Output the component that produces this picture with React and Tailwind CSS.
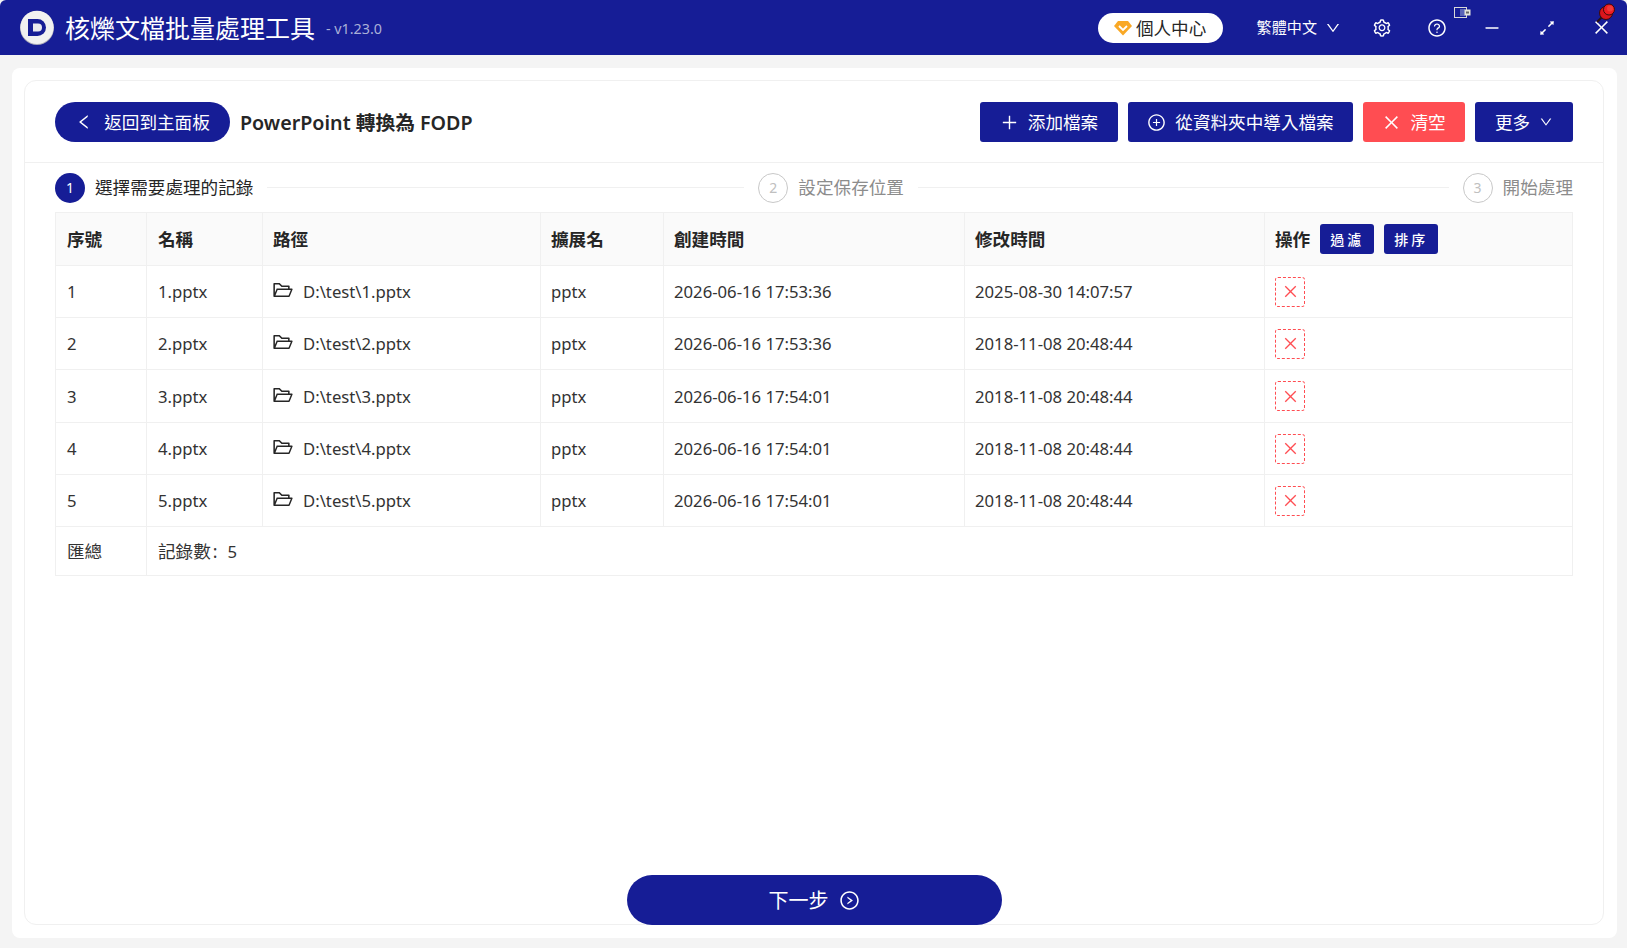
import React from "react";
import { AiOutlineLeft, AiOutlinePlus, AiOutlinePlusCircle, AiOutlineClose, AiOutlineDown, AiOutlineSetting, AiOutlineQuestionCircle, AiOutlineMinus, AiOutlineArrowsAlt, AiOutlineFolderOpen, AiOutlineRightCircle } from "react-icons/ai";

const FONT = "font-['Noto_Sans','Noto_Sans_CJK_TC',sans-serif]";

const rows = [
  ["1", "2026-06-16 17:53:36", "2025-08-30 14:07:57", "h-[52px]"],
  ["2", "2026-06-16 17:53:36", "2018-11-08 20:48:44", "h-[52px]"],
  ["3", "2026-06-16 17:54:01", "2018-11-08 20:48:44", "h-[53px]"],
  ["4", "2026-06-16 17:54:01", "2018-11-08 20:48:44", "h-[52px]"],
  ["5", "2026-06-16 17:54:01", "2018-11-08 20:48:44", "h-[52px]"],
];

function Logo() {
  return (
    <svg width="36" height="36" viewBox="0 0 36 36">
      <circle cx="18" cy="18" r="17" fill="#a9a9b8" />
      <circle cx="18" cy="17.3" r="16.6" fill="#f1f1f1" />
      <path d="M9 9h9.5a8.5 8.5 0 0 1 0 17H9z" fill="#161d96" />
      <path d="M14 13.5h5a4 4 0 0 1 0 8h-5z" fill="#e9e9ee" />
    </svg>
  );
}

function Btn({ children, className = "" }) {
  return (
    <button className={`flex h-10 items-center justify-center gap-[9px] rounded-[3px] pt-[1px] text-[17.6px] text-white ${className}`}>
      {children}
    </button>
  );
}

function Th({ children, wide }) {
  return <th className={`border border-[#f0f0f0] text-left text-[17.6px] font-bold text-[#262626] ${wide ? "pl-[11px]" : "pl-[10px]"}`}>{children}</th>;
}

function Td({ children, wide }) {
  return <td className={`border border-[#f0f0f0] pt-[1px] text-[16.7px] text-[#333] ${wide ? "pl-[11px]" : "pl-[10px]"}`}>{children}</td>;
}

function Step({ n, label, active }) {
  return (
    <div className="flex items-center gap-[10px]">
      <div className={`flex h-[30px] w-[30px] items-center justify-center rounded-full text-[14px] ${active ? "bg-[#161d96] text-white" : "border border-[#c8c8c8] text-[#c0c0c0]"}`}>{n}</div>
      <span className={`text-[17.6px] ${active ? "text-[#262626]" : "text-[#8c8c8c]"}`}>{label}</span>
    </div>
  );
}

function WinBox({ children }) {
  return <span className="flex w-[55px] justify-center">{children}</span>;
}

export default function App() {
  return (
    <div className={`relative flex h-[948px] w-[1627px] flex-col overflow-hidden bg-[#f4f4f4] ${FONT}`}>
      <header className="flex h-[55px] shrink-0 items-center rounded-t-[6px] bg-[#161d96] pl-[19px] text-white">
        <Logo />
        <span className="ml-[10px] pt-[1px] text-[25px] leading-none">核爍文檔批量處理工具</span>
        <span className="ml-[11px] mt-[3px] text-[14.3px] text-[#aab0d8]">- v1.23.0</span>
        <div className="-mr-[2px] ml-auto flex items-center">
          <div className="flex h-[30px] w-[125px] items-center justify-center gap-[4px] rounded-full bg-white pt-[1px] text-[17.6px] text-[#262626]">
            <svg width="18" height="16" viewBox="0 0 18 16">
              <path d="M4 1h10l4 5-9 9.5L0 6z" fill="#f9a825" />
              <path d="M5 6l4 4 4-4" fill="none" stroke="#fff" strokeWidth="1.8" />
            </svg>
            個人中心
          </div>
          <span className="ml-[34px] text-[15.1px]">繁體中文</span>
          <AiOutlineDown className="ml-[8px] mr-[13px] text-[16px]" />
          <WinBox><AiOutlineSetting className="text-[20px]" /></WinBox>
          <WinBox><AiOutlineQuestionCircle className="text-[20px]" /></WinBox>
          <WinBox><AiOutlineMinus className="text-[18px]" /></WinBox>
          <WinBox><AiOutlineArrowsAlt className="text-[20px]" /></WinBox>
          <WinBox><AiOutlineClose className="text-[19px]" /></WinBox>
        </div>
      </header>

      <svg className="absolute left-[1454px] top-[7px]" width="17" height="11" viewBox="0 0 17 11">
        <rect x="0.5" y="0.5" width="12" height="10" fill="#161d96" stroke="#d8d8d8" />
        <rect x="6" y="2" width="5" height="7" fill="#5a64b8" />
        <rect x="10.5" y="2.5" width="6" height="6" fill="#e4e4dc" />
        <rect x="12" y="4.5" width="3" height="2" fill="#666" />
      </svg>
      <svg className="absolute left-[1595px] top-[2px]" width="22" height="22" viewBox="0 0 22 22">
        <path d="M8 14l-6 6" stroke="#2a1010" strokeWidth="2" />
        <circle cx="11" cy="11" r="6.5" fill="#d9161c" stroke="#3a0a0a" strokeWidth="1" />
        <circle cx="14" cy="7.5" r="5.5" fill="#ee1c22" stroke="#3a0a0a" strokeWidth="1" />
        <circle cx="15" cy="6.5" r="3" fill="#f03a3a" />
      </svg>

      <div className="flex min-h-0 flex-1 pb-[10px] pl-[12px] pr-[10px] pt-[13px]">
        <div className="flex flex-1 rounded-[8px] bg-white p-[12px] pb-[13px] pr-[13px]">
          <main className="flex flex-1 flex-col rounded-[12px] border border-[#f0f0f0]">
            <div className="flex h-[82px] shrink-0 items-center border-b border-[#f0f0f0] pl-[30px] pr-[30px]">
              <button className="flex h-10 w-[175px] items-center justify-center gap-[11px] rounded-full bg-[#161d96] pt-[1px] text-[17.6px] text-white">
                <AiOutlineLeft className="text-[18px]" />
                返回到主面板
              </button>
              <span className="ml-[10px] pt-[2px] text-[19.7px] font-semibold text-[#262626]">PowerPoint 轉換為 FODP</span>
              <div className="ml-auto flex items-center gap-[10px]">
                <Btn className="w-[138px] bg-[#161d96]"><AiOutlinePlus className="text-[19px]" />添加檔案</Btn>
                <Btn className="w-[225px] bg-[#161d96]"><AiOutlinePlusCircle className="text-[19px]" />從資料夾中導入檔案</Btn>
                <Btn className="w-[102px] bg-[#ff4d52]"><AiOutlineClose className="text-[19px]" />清空</Btn>
                <Btn className="w-[98px] bg-[#161d96]">更多<AiOutlineDown className="text-[14px]" /></Btn>
              </div>
            </div>

            <div className="flex h-[49px] shrink-0 items-center pl-[30px] pr-[30px]">
              <Step n="1" label="選擇需要處理的記錄" active />
              <div className="mx-[14px] h-px w-[477px] bg-[#f0f0f0]" />
              <Step n="2" label="設定保存位置" />
              <div className="mx-[14px] h-px flex-1 bg-[#f0f0f0]" />
              <Step n="3" label="開始處理" />
            </div>

            <div className="pl-[30px] pr-[30px]">
              <table className="w-full table-fixed border-collapse">
                <colgroup>
                  <col className="w-[91px]" />
                  <col className="w-[116px]" />
                  <col className="w-[278px]" />
                  <col className="w-[123px]" />
                  <col className="w-[301px]" />
                  <col className="w-[300px]" />
                  <col />
                </colgroup>
                <thead>
                  <tr className="h-[53px] bg-[#fafafa]">
                    <Th wide>序號</Th>
                    <Th wide>名稱</Th>
                    <Th>路徑</Th>
                    <Th>擴展名</Th>
                    <Th>創建時間</Th>
                    <Th>修改時間</Th>
                    <Th>
                      <div className="flex items-center gap-[10px]">
                        操作
                        <button className="h-[30px] w-[54px] rounded-[3px] bg-[#161d96] text-[14px] font-medium tracking-[3px] text-white">過濾</button>
                        <button className="h-[30px] w-[54px] rounded-[3px] bg-[#161d96] text-[14px] font-medium tracking-[3px] text-white">排序</button>
                      </div>
                    </Th>
                  </tr>
                </thead>
                <tbody>
                  {rows.map(([n, created, modified, h]) => (
                    <tr key={n} className={h}>
                      <Td wide>{n}</Td>
                      <Td wide>{n}.pptx</Td>
                      <Td>
                        <div className="flex items-center gap-[9px]">
                          <AiOutlineFolderOpen className="-ml-[1px] -mt-[3px] text-[22px] text-[#262626]" />
                          D:\test\{n}.pptx
                        </div>
                      </Td>
                      <Td>pptx</Td>
                      <Td>{created}</Td>
                      <Td>{modified}</Td>
                      <td className="border border-[#f0f0f0] pl-[10px]">
                        <div className="flex h-[30px] w-[30px] items-center justify-center rounded-[3px] border border-dashed border-[#ff4d52] text-[#ff4d52]">
                          <AiOutlineClose className="text-[17px]" />
                        </div>
                      </td>
                    </tr>
                  ))}
                  <tr className="h-[49px]">
                    <td className="border border-[#f0f0f0] pl-[11px] text-[17.6px] text-[#333]">匯總</td>
                    <td colSpan={6} className="border border-[#f0f0f0] pl-[11px] text-[17.6px] text-[#333]">
                      記錄數<span className="ml-[2px]">:</span><span className="ml-[10px] text-[16.7px]">5</span>
                    </td>
                  </tr>
                </tbody>
              </table>
            </div>

            <div className="mb-[-1px] mt-auto flex justify-center">
              <button className="flex h-[50px] w-[375px] items-center justify-center gap-[10px] rounded-full bg-[#161d96] pt-[1px] text-[20px] text-white">
                下一步
                <AiOutlineRightCircle className="text-[21px]" />
              </button>
            </div>
          </main>
        </div>
      </div>
    </div>
  );
}
